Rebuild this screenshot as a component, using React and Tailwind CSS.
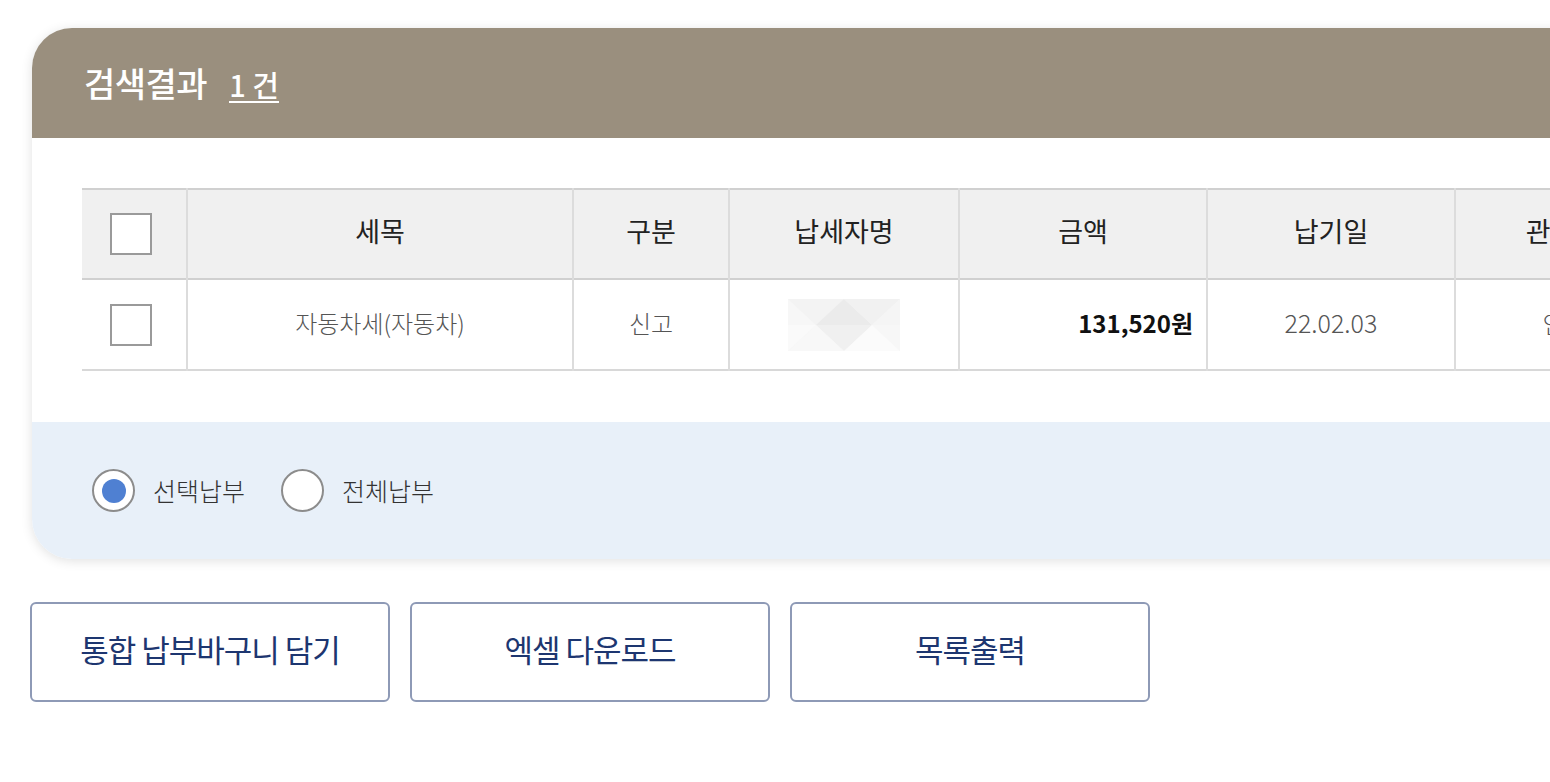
const font = { fontFamily: '"Noto Sans CJK KR", "Noto Sans", sans-serif' };

const Checkbox = () => (
  <span className="inline-block w-[42px] h-[42px] border-2 border-[#9a9a9a] bg-white" />
);

const Radio = ({ checked, label }) => (
  <label className="flex items-center gap-[18px] mr-[36px]">
    <span className="w-[43px] h-[43px] rounded-full border-2 border-[#8c8c8c] bg-white flex items-center justify-center">
      {checked && <span className="w-[24px] h-[24px] rounded-full bg-[#4f80d2]" />}
    </span>
    <span className="text-[25px] text-[#333] font-light">{label}</span>
  </label>
);

const Masked = () => (
  <svg width="112" height="52" viewBox="0 0 112 52">
    <rect x="0" y="0" width="112" height="52" fill="#f7f7f7" />
    <polygon points="0,0 56,0 28,26" fill="#f3f3f3" />
    <polygon points="28,26 56,0 84,26" fill="#ebebeb" />
    <polygon points="56,0 112,0 84,26" fill="#f1f1f1" />
    <polygon points="84,26 112,0 112,26" fill="#f5f5f5" />
    <polygon points="0,26 28,26 0,52" fill="#fafafa" />
    <polygon points="28,26 84,26 56,52" fill="#f0f0f0" />
    <polygon points="0,52 28,26 56,52" fill="#f8f8f8" />
    <polygon points="56,52 84,26 112,52" fill="#fbfbfb" />
  </svg>
);

const cols = [
  { w: 'w-[105px]', head: null },
  { w: 'w-[386px]', head: '세목' },
  { w: 'w-[156px]', head: '구분' },
  { w: 'w-[230px]', head: '납세자명' },
  { w: 'w-[248px]', head: '금액' },
  { w: 'w-[248px]', head: '납기일' },
  { w: 'w-[240px]', head: '관리번호' },
];

const cell = 'border-l-2 border-[#dcdcdc] text-center text-[24px] font-light text-[#555] pb-[4px]';

export default function App() {
  return (
    <div className="w-full min-h-[782px] bg-white overflow-hidden" style={font}>
      <div className="pt-[28px] pl-[32px]">
        <div className="w-[1700px] rounded-l-[40px] bg-white shadow-[0_2px_12px_rgba(0,0,0,0.12)] overflow-hidden">
          <div className="h-[110px] bg-[#9a8f7e] flex items-center pl-[52px] pb-[2px]">
            <h2 className="text-[34px] text-white font-medium tracking-[-0.5px]">검색결과</h2>
            <span className="ml-[22px] text-[29px] text-white font-medium border-b-2 border-white leading-[34px] mt-[6px]">1 건</span>
          </div>

          <div className="pt-[50px] pb-[51px] pl-[50px]">
            <table className="border-collapse table-fixed w-[1613px]">
              <thead>
                <tr className="h-[90px] bg-[#f0f0f0] border-t-2 border-b-2 border-[#d0d0d0]">
                  {cols.map((c, i) => (
                    <th
                      key={i}
                      className={`${c.w} font-normal text-[27px] text-[#222] text-center pb-[5px] ${i > 0 ? 'border-l-2 border-[#dcdcdc]' : ''}`}
                    >
                      {c.head === null ? (
                        <div className="flex pl-[28px] pt-[5px]"><Checkbox /></div>
                      ) : (
                        c.head
                      )}
                    </th>
                  ))}
                </tr>
              </thead>
              <tbody>
                <tr className="h-[91px] border-b-2 border-[#d8d8d8]">
                  <td>
                    <div className="flex pl-[28px]"><Checkbox /></div>
                  </td>
                  <td className={cell}>자동차세(자동차)</td>
                  <td className={cell}>신고</td>
                  <td className="border-l-2 border-[#dcdcdc]">
                    <div className="flex justify-center"><Masked /></div>
                  </td>
                  <td className="border-l-2 border-[#dcdcdc] text-right pr-[13px] pb-[4px] text-[24px] font-bold text-[#111]">131,520원</td>
                  <td className={`${cell} text-[25px]`}>22.02.03</td>
                  <td className={cell}>인천시</td>
                </tr>
              </tbody>
            </table>
          </div>

          <div className="h-[137px] bg-[#e8f0f9] flex items-center pl-[60px]">
            <Radio checked label="선택납부" />
            <Radio label="전체납부" />
          </div>
        </div>
      </div>

      <div className="flex gap-[20px] pl-[30px] mt-[43px]">
        {['통합 납부바구니 담기', '엑셀 다운로드', '목록출력'].map((t) => (
          <button
            key={t}
            className="w-[360px] h-[100px] border-2 border-[#8e9ab6] rounded-[6px] bg-white text-[31px] text-[#1d3670] font-normal tracking-[-1px] pb-[6px]"
          >
            {t}
          </button>
        ))}
      </div>
    </div>
  );
}
